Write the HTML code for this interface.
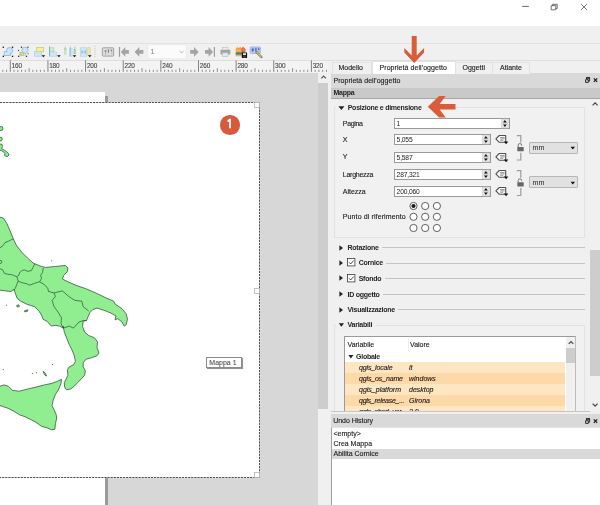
<!DOCTYPE html>
<html lang="it"><head><meta charset="utf-8"><title>Layout</title>
<style>
*{box-sizing:border-box;margin:0;padding:0}
html,body{width:600px;height:505px;overflow:hidden;background:#fff}
body{position:relative;font-family:"Liberation Sans",sans-serif;font-size:7px;color:#1a1a1a;line-height:1}
.a{position:absolute}
.t{position:absolute;white-space:nowrap;line-height:10px;height:10px;-webkit-text-stroke:0.12px currentColor}
.b{font-weight:bold;letter-spacing:-0.25px;-webkit-text-stroke:0 transparent;color:#242424}
.inp{position:absolute;background:#fff;border:1px solid #999;height:11px}
.inp span{position:absolute;left:1.6px;top:0;line-height:9px;font-size:6.7px;letter-spacing:-0.18px}
.combo{position:absolute;background:#e1e1e1;border:1px solid #b6b6b6;border-radius:1px;height:12px}
.combo span{position:absolute;left:2.6px;top:0.3px;line-height:10px;letter-spacing:0.1px}
.ln{position:absolute;height:1px;background:#c4c4c4}
.rad{position:absolute;width:8px;height:8px;border:1px solid #333;border-radius:50%;background:#fff}
.row{position:absolute;left:345px;width:220px;height:11px}
.row i{position:absolute;top:0;line-height:11px;font-style:italic;-webkit-text-stroke:0.12px currentColor}
svg{position:absolute;overflow:visible}
</style></head><body>
<div id="root" style="position:absolute;left:0;top:0;width:600px;height:505px;will-change:transform">

<div class="a" style="left:0;top:26px;width:600px;height:34px;background:#f0f0f0"></div>
<div class="a" style="left:0;top:43px;width:600px;height:1px;background:#e2e2e2"></div>
<div class="a" style="left:0;top:60px;width:600px;height:1px;background:#dedede"></div>
<svg style="left:520px;top:0" width="80" height="14" viewBox="0 0 80 14">
<path d="M2.2 6.4h6.6" stroke="#444" stroke-width="0.8" fill="none"/>
<path d="M31.2 5.6h4.6v4.2h-4.6zM32.6 5.6v-1.3h4.6v4.2h-1.4" stroke="#444" stroke-width="0.75" fill="none"/>
<path d="M61.2 4.2l5.6 5.6M66.8 4.2l-5.6 5.6" stroke="#444" stroke-width="0.75" fill="none"/>
</svg>
<div class="a" style="left:0;top:60.6px;width:328px;height:12.4px;background:#f3f3f3"></div>
<svg style="left:0;top:60px" width="328" height="13" viewBox="0 0 328 13"><path d="M2.77 9.8v2.1M6.54 9.8v2.1M14.06 9.8v2.1M17.83 9.8v2.1M21.59 9.8v2.1M25.36 9.8v2.1M29.12 8.2v3.7M32.88 9.8v2.1M36.65 9.8v2.1M40.41 9.8v2.1M44.18 9.8v2.1M51.70 9.8v2.1M55.47 9.8v2.1M59.23 9.8v2.1M63.00 9.8v2.1M66.76 8.2v3.7M70.52 9.8v2.1M74.29 9.8v2.1M78.05 9.8v2.1M81.82 9.8v2.1M89.34 9.8v2.1M93.11 9.8v2.1M96.87 9.8v2.1M100.64 9.8v2.1M104.40 8.2v3.7M108.16 9.8v2.1M111.93 9.8v2.1M115.69 9.8v2.1M119.46 9.8v2.1M126.98 9.8v2.1M130.75 9.8v2.1M134.51 9.8v2.1M138.28 9.8v2.1M142.04 8.2v3.7M145.80 9.8v2.1M149.57 9.8v2.1M153.33 9.8v2.1M157.10 9.8v2.1M164.62 9.8v2.1M168.39 9.8v2.1M172.15 9.8v2.1M175.92 9.8v2.1M179.68 8.2v3.7M183.44 9.8v2.1M187.21 9.8v2.1M190.97 9.8v2.1M194.74 9.8v2.1M202.26 9.8v2.1M206.03 9.8v2.1M209.79 9.8v2.1M213.56 9.8v2.1M217.32 8.2v3.7M221.08 9.8v2.1M224.85 9.8v2.1M228.61 9.8v2.1M232.38 9.8v2.1M239.90 9.8v2.1M243.67 9.8v2.1M247.43 9.8v2.1M251.20 9.8v2.1M254.96 8.2v3.7M258.72 9.8v2.1M262.49 9.8v2.1M266.25 9.8v2.1M270.02 9.8v2.1M277.54 9.8v2.1M281.31 9.8v2.1M285.07 9.8v2.1M288.84 9.8v2.1M292.60 8.2v3.7M296.36 9.8v2.1M300.13 9.8v2.1M303.89 9.8v2.1M307.66 9.8v2.1M315.18 9.8v2.1M318.95 9.8v2.1M322.71 9.8v2.1M326.48 9.8v2.1" stroke="#606060" stroke-width="0.7" fill="none"/><path d="M10.30 0.3v11.6M47.94 0.3v11.6M85.58 0.3v11.6M123.22 0.3v11.6M160.86 0.3v11.6M198.50 0.3v11.6M236.14 0.3v11.6M273.78 0.3v11.6M311.42 0.3v11.6" stroke="#767676" stroke-width="0.9" fill="none"/></svg>
<div class="t" style="left:11.6px;top:62px;font-size:6.4px;letter-spacing:-0.12px;line-height:7px;height:7px;color:#484848">160</div>
<div class="t" style="left:49.2px;top:62px;font-size:6.4px;letter-spacing:-0.12px;line-height:7px;height:7px;color:#484848">180</div>
<div class="t" style="left:86.9px;top:62px;font-size:6.4px;letter-spacing:-0.12px;line-height:7px;height:7px;color:#484848">200</div>
<div class="t" style="left:124.5px;top:62px;font-size:6.4px;letter-spacing:-0.12px;line-height:7px;height:7px;color:#484848">220</div>
<div class="t" style="left:162.2px;top:62px;font-size:6.4px;letter-spacing:-0.12px;line-height:7px;height:7px;color:#484848">240</div>
<div class="t" style="left:199.8px;top:62px;font-size:6.4px;letter-spacing:-0.12px;line-height:7px;height:7px;color:#484848">260</div>
<div class="t" style="left:237.4px;top:62px;font-size:6.4px;letter-spacing:-0.12px;line-height:7px;height:7px;color:#484848">280</div>
<div class="t" style="left:275.1px;top:62px;font-size:6.4px;letter-spacing:-0.12px;line-height:7px;height:7px;color:#484848">300</div>
<div class="t" style="left:312.7px;top:62px;font-size:6.4px;letter-spacing:-0.12px;line-height:7px;height:7px;color:#484848">320</div>
<div class="a" style="left:0;top:72.5px;width:318.4px;height:432.5px;background:#d7d7d7"></div>
<div class="a" style="left:0;top:92px;width:105px;height:413px;background:#fff"></div>
<div class="a" style="left:105px;top:96px;width:3px;height:409px;background:#9a9a9a"></div>
<div class="a" style="left:0;top:102px;width:260px;height:376px;background:#fff"></div>
<svg style="left:0;top:0" width="320" height="505" viewBox="0 0 320 505">
<g id="MAP"><g fill="#90ee90" stroke="#2b4f33" stroke-width="0.75" stroke-linejoin="round">
<path d="M0.0 217.2L3.3 218.0L6.9 223.6L10.5 231.9L13.3 238.8L16.6 245.7L22.2 252.7L27.7 258.2L33.3 263.2L41.6 266.5L45.7 267.4L55.4 266.5L65.2 265.4L67.9 267.9L67.4 271.5L63.8 275.4L62.4 279.0L67.9 281.8L76.2 285.4L85.9 288.7L95.6 292.9L105.4 297.6L113.7 301.2L115.1 304.0L122.0 308.7L126.1 313.7L127.5 319.2L126.1 324.8L124.2 326.1L122.0 322.0L117.8 318.7L115.1 319.8L115.9 315.9L110.9 313.1L104.0 310.3L97.0 308.1L92.9 309.5L90.1 312.3L88.2 316.4L86.5 320.6L83.2 321.1L82.6 326.6L84.6 332.2L88.7 335.5L94.3 337.7L97.6 341.9L97.0 347.4L99.0 353.0L97.0 355.7L91.5 357.7L85.9 359.3L83.2 362.7L83.2 366.8L85.4 371.0L84.6 375.2L81.0 379.3L77.6 382.6L74.3 386.2L70.7 389.0L66.5 389.8L64.6 387.1L64.3 382.6L66.0 379.3L67.9 375.2L67.4 369.6L69.3 366.8L73.5 364.9L75.4 361.3L74.3 355.7L72.1 350.2L69.3 344.7L66.5 337.7L64.3 332.2L63.2 326.1L63.2 328.1L59.6 326.1L55.4 325.3L51.3 326.1L47.1 321.4L43.0 319.2L41.6 315.1L38.8 310.9L34.7 306.7L30.5 305.4L26.3 304.0L20.8 301.2L17.2 298.4L15.2 292.9L13.9 289.3L11.1 291.5L5.5 290.9L0.0 290.1L-2.0 290.0L-2.0 217.0z"/>
<path d="M0.0 386.2L4.2 384.9L8.3 386.2L12.5 390.4L19.4 391.2L27.7 389.0L36.0 387.1L44.4 384.9L51.3 383.5L56.8 381.5L61.5 379.3L61.0 383.5L58.8 389.0L55.4 394.6L53.2 400.1L52.1 405.6L54.1 409.8L56.0 414.0L56.8 418.1L55.4 423.7L54.9 429.2L51.3 429.8L47.1 427.8L41.6 426.4L36.0 422.3L30.5 419.5L25.0 416.7L19.4 414.8L13.9 411.2L8.3 408.4L2.8 406.5L0.0 405.6L-2.0 405.0L-2.0 386.0z"/>
<path d="M-1.0 126.8L2.2 126.6L3.0 128.2L2.4 130.2L-1.0 130.6z"/>
<path d="M-1.0 137.6L1.6 137.3L2.3 139.0L1.2 141.0L-1.0 141.2z"/>
<path d="M-1.0 144.0L2.0 144.2L2.4 146.5L1.6 148.6L4.0 150.0L6.4 151.6L8.2 153.2L9.0 155.0L7.6 156.4L5.6 156.3L4.4 155.0L5.2 153.6L3.4 152.0L1.2 150.4L-1.0 150.0z"/>
<path d="M43.0 371.5L44.9 372.7L46.6 376.0L45.2 375.4L43.8 373.2z"/>
<path d="M16.6 305.4L18.9 304.8L19.4 306.5L17.2 307.0z"/>
<path d="M24.4 310.9L27.7 309.8L28.0 310.9L25.0 312.0z"/>
</g><g fill="none" stroke="#2b4f33" stroke-width="0.7">
<path d="M-1.0 248.6L3.0 245.6L5.0 242.6L8.9 241.0L13.5 238.7"/>
<path d="M-1.0 260.4L1.4 260.6L2.0 262.0L1.0 263.4L-1.0 263.2"/>
<path d="M-1.0 268.0L3.0 270.3L4.4 273.3L7.9 274.3L11.9 274.7L16.8 276.7L18.8 275.3L19.8 272.3L22.2 270.3L24.8 270.0L27.7 271.3L31.3 270.7L34.7 264.0"/>
<path d="M16.8 276.7L18.2 281.2L16.8 284.2L15.4 288.2L13.9 290.5"/>
<path d="M18.2 281.2L21.8 282.6L26.7 283.8L29.7 285.2L34.7 283.2L39.6 281.8L41.6 278.3L40.6 275.3L42.6 272.3L43.2 268.0"/>
<path d="M39.6 281.8L44.4 284.6L47.7 288.2L48.5 291.5L54.1 292.9L62.4 290.9L68.8 296.5L74.9 300.4L81.8 301.2L83.2 306.7L88.7 310.9"/>
<path d="M54.1 292.9L55.4 296.5L52.1 300.4L54.1 306.7L58.2 312.3L61.5 317.8L61.0 323.4L63.2 328.1"/>
<path d="M63.2 328.1L69.3 326.1L73.5 328.1L79.0 322.0L83.2 320.6L86.5 320.6"/>
</g>
<g fill="#2b4f33">
<rect x="52.1" y="364.1" width="0.9" height="0.9"/>
<rect x="2.8" y="369.1" width="0.9" height="0.9"/>
<rect x="31.9" y="373.2" width="0.9" height="0.9"/>
<rect x="36.0" y="372.4" width="0.9" height="0.9"/>
<rect x="51.3" y="260.4" width="0.9" height="0.9"/>
<rect x="6.1" y="304.8" width="0.9" height="0.9"/>
</g></g>
<path d="M0 102.5H259.5V477.5H0" stroke="#3c3c3c" stroke-width="0.9" stroke-dasharray="2.2 0.9" fill="none"/>
<rect x="254.5" y="102.5" width="5" height="5" fill="#fff" stroke="#9db3c2" stroke-width="0.7"/>
<rect x="254.5" y="288.5" width="5" height="5" fill="#fff" stroke="#9db3c2" stroke-width="0.7"/>
<rect x="254.5" y="472.5" width="5" height="5" fill="#fff" stroke="#9db3c2" stroke-width="0.7"/>
</svg>
<div class="a" style="left:220px;top:115px;width:19.6px;height:19.6px;border-radius:50%;background:#d65a3b"></div>
<div class="t" style="left:220px;top:114.6px;width:19.6px;height:19.6px;line-height:19.6px;text-align:center;color:#fff;font-weight:bold;font-size:11.3px;font-family:NanumGothic,'Liberation Sans',sans-serif;-webkit-text-stroke:0.65px #fff">1</div>
<div class="a" style="left:206.3px;top:357.3px;width:35.5px;height:11.2px;background:#fff;border:1px solid #8a8a8a;box-shadow:1.4px 1.4px 0.6px rgba(60,60,60,.55)"></div>
<div class="t" style="left:209.3px;top:358px;color:#575757;font-size:7px">Mappa 1</div>
<div class="a" style="left:318.4px;top:73px;width:9.6px;height:432px;background:#f0f0f0"></div>
<div class="a" style="left:318.4px;top:83px;width:9.4px;height:325.7px;background:#cdcdcd"></div>
<svg style="left:319px;top:73px" width="9" height="10" viewBox="0 0 9 10"><path d="M2.3 5.4L4.6 3.1L6.9 5.4" stroke="#555" stroke-width="1.1" fill="none"/></svg>
<div class="a" style="left:328px;top:61px;width:3px;height:444px;background:#f0f0f0"></div>
<svg style="left:0;top:44px" width="270" height="16" viewBox="0 44 270 16">
<rect x="4.2" y="51.8" width="6.2" height="3.5" fill="#d0e6f6" stroke="#6aaade" stroke-width="0.7"/><circle cx="9.6" cy="50.6" r="3.1" fill="#d0e6f6" stroke="#6aaade" stroke-width="0.7"/><rect x="4.6" y="52.2" width="5.4" height="2.7" fill="#d0e6f6"/>
<rect x="2.7" y="46.6" width="1.3" height="1.3" fill="#111"/>
<rect x="11.9" y="46.6" width="1.3" height="1.3" fill="#111"/>
<rect x="2.7" y="55.7" width="1.3" height="1.3" fill="#111"/>
<rect x="11.9" y="55.7" width="1.3" height="1.3" fill="#111"/>
<rect x="19.8" y="52.4" width="5.4" height="3" fill="#f3f0a2" stroke="#c4c264" stroke-width="0.6"/><circle cx="25" cy="50.3" r="3.1" fill="#d0e6f6" stroke="#6aaade" stroke-width="0.6"/><rect x="20.6" y="52.8" width="3" height="2.2" fill="#dfe39a" stroke="#a9ad5e" stroke-width="0.5"/>
<rect x="20.9" y="46.6" width="1.2" height="1.2" fill="#111"/>
<rect x="27.3" y="46.6" width="1.2" height="1.2" fill="#333"/>
<rect x="17.9" y="49.9" width="1.2" height="1.2" fill="#444"/>
<rect x="18.1" y="55.7" width="1.2" height="1.2" fill="#111"/>
<rect x="25.9" y="55.7" width="1.2" height="1.2" fill="#111"/>
<rect x="27.7" y="53.1" width="1.2" height="1.2" fill="#888"/>
<rect x="34.3" y="51.6" width="7" height="4.6" fill="#d0e6f6" stroke="#9fcbeb" stroke-width="0.6"/><rect x="36.7" y="47.5" width="7" height="4.3" fill="#f3f0a2" stroke="#c4c264" stroke-width="0.6"/><path d="M41.6 55.2h3.6l-1.8 2.1z" fill="#111"/>
<rect x="49.8" y="47.8" width="4.1" height="4" fill="#ccf0c2" stroke="#9bd48c" stroke-width="0.5"/><rect x="49.8" y="52" width="7" height="4.2" fill="#d0e6f6" stroke="#9fcbeb" stroke-width="0.5"/><path d="M49.5 46.3v10" stroke="#6f9cc4" stroke-width="0.7" fill="none"/><path d="M57.1 55.2h3.6l-1.8 2.1z" fill="#111"/>
<rect x="64.2" y="48.8" width="1.9" height="5.4" fill="#ccf0c2" stroke="#9bd48c" stroke-width="0.4"/><rect x="69.5" y="48.4" width="2.6" height="7.8" fill="#d0e6f6" stroke="#9fcbeb" stroke-width="0.4"/><rect x="73.9" y="49.2" width="1.8" height="4.6" fill="#ccf0c2" stroke="#9bd48c" stroke-width="0.4"/><path d="M65.2 46.5v3.5M70.3 46.5v9.7M74.8 46.5v7.5" stroke="#7fa6c8" stroke-width="0.6"/><path d="M72.7 55.2h3.6l-1.8 2.1z" fill="#111"/>
<rect x="80.6" y="47.8" width="6.2" height="8.4" fill="#d0e6f6" stroke="#9fcbeb" stroke-width="0.5"/><path d="M81.4 50l2.3 2l-2.3 2zM86 50l-2.3 2l2.3 2z" fill="#92bfe4"/><rect x="87.9" y="47.8" width="2.2" height="7.7" fill="#f3f0a2" stroke="#c4c264" stroke-width="0.5"/><path d="M88 55.2h3.6l-1.8 2.1z" fill="#111"/>
<path d="M95 46v12" stroke="#c8c8c8" stroke-width="1" stroke-dasharray="1 1"/>
<rect x="102.4" y="47.8" width="11.3" height="8.3" rx="0.8" fill="#dedede" stroke="#8e8e8e" stroke-width="0.8"/><path d="M104.4 50.2h2.2l-0.4 2.4h-1.2zM107.6 49.6h1.8l-0.6 3.4h-0.9zM110.6 49.4h1.6v2.2h-1.2z" fill="#8a8a8a"/><path d="M105.6 53v1.6M111.8 52.6v1.6" stroke="#9a9a9a" stroke-width="0.7"/>
<path d="M119.5 47v9.8" stroke="#9c9c9c" stroke-width="1.2"/><path d="M120.8 51.9l4.5-4.8v2.9h3.6v3.8h-3.6v2.9z" fill="#a4a4a4"/>
<path d="M134.6 51.9l4.7-4.8v2.9h4.1v3.8h-4.1v2.9z" fill="#a4a4a4"/>
<rect x="148" y="45" width="38" height="13.6" fill="#fbfbfb" stroke="#e8e8e8" stroke-width="0.5"/><path d="M179.6 51l1.9 1.9l1.9-1.9" stroke="#9a9a9a" stroke-width="0.8" fill="none"/>
<path d="M198.7 51.9l-4.7-4.8v2.9h-3.8v3.8h3.8v2.9z" fill="#a4a4a4"/>
<path d="M214.4 47v9.8" stroke="#9c9c9c" stroke-width="1.2"/><path d="M213.1 51.9l-4.5-4.8v2.9h-3.6v3.8h3.6v2.9z" fill="#a4a4a4"/>
<rect x="222.6" y="47.6" width="5.4" height="2.8" fill="#ececec" stroke="#b4b4b4" stroke-width="0.5"/><rect x="220.4" y="49.8" width="10" height="4.6" rx="0.9" fill="#a2a4a8"/><rect x="222.6" y="52.8" width="5.4" height="3.8" fill="#e2e8ee" stroke="#b0b4b8" stroke-width="0.5"/>
<path d="M235.6 49.4l1.6-2.4l1.5 1.6l1.5-2l1.4 2.8z" fill="#f0922e"/><rect x="235.6" y="48.8" width="9" height="7.5" fill="#f0b63a"/><path d="M241 48.8l2-2.2l2.6 2.6v3.2h-4.6z" fill="#e8705a"/><rect x="235.8" y="52.3" width="7.6" height="2.3" fill="#3b7ea6"/><rect x="241.8" y="52.6" width="5.3" height="5.3" rx="0.4" fill="#141414"/><rect x="243" y="53.2" width="3" height="1.9" fill="#e6e6e6"/><rect x="243.4" y="56.2" width="2.2" height="1.3" fill="#5a5a5a"/>
<rect x="250.2" y="46.9" width="10.2" height="6.6" rx="0.9" fill="#b6c8ee" stroke="#8aa2da" stroke-width="0.6"/><path d="M251.8 48.6h2v1.8l-1 1.2h-1zM255 48.2h1.8l-0.4 2.8h-1zM258 48.2h1.4v2h-1z" fill="#4765b0"/><path d="M256.4 52l5 5" stroke="#6d6838" stroke-width="2.2" stroke-linecap="round"/><path d="M256.6 52.2l4.6 4.6" stroke="#cfc888" stroke-width="1.1" stroke-linecap="round"/>
</svg>
<div class="t" style="left:150.6px;top:47.3px;color:#8c8c8c;font-size:7px">1</div>
<div class="a" style="left:331px;top:61px;width:269px;height:444px;background:#f0f0f0"></div>
<div class="a" style="left:331px;top:73px;width:269px;height:1px;background:#d9d9d9"></div>
<div class="a" style="left:332px;top:62px;width:40px;height:12px;border:1px solid #e2e2e2;border-bottom:none;background:#f0f0f0"></div>
<div class="a" style="left:455px;top:62px;width:37.5px;height:12px;border:1px solid #e2e2e2;border-bottom:none;border-left:none;background:#f0f0f0"></div>
<div class="a" style="left:492.5px;top:62px;width:37px;height:12px;border:1px solid #e2e2e2;border-bottom:none;border-left:none;background:#f0f0f0"></div>
<div class="a" style="left:371.5px;top:60.5px;width:84px;height:13.5px;border:1px solid #e2e2e2;border-bottom:none;background:#fff"></div>
<div class="t" id="tb1" style="left:338.5px;top:63.2px">Modello</div>
<div class="t" id="tb2" style="letter-spacing:0.07px;left:379.5px;top:63px">Proprietà dell'oggetto</div>
<div class="t" id="tb3" style="left:462.5px;top:63.2px">Oggetti</div>
<div class="t" id="tb4" style="left:500px;top:63.2px">Atlante</div>
<div class="a" style="left:331px;top:74px;width:269px;height:13.5px;background:#d9d9d9"></div>
<div class="t" id="dt1" style="letter-spacing:0.04px;left:333.5px;top:75.5px">Proprietà dell'oggetto</div>
<svg style="left:584px;top:76px" width="16" height="9" viewBox="0 0 16 9">
<path d="M1.6 3.7h2.7v2.7h-2.7z" stroke="#1a1a1a" stroke-width="0.9" fill="none"/><path d="M2.5 3v-1.1h3.1v3.2h-1" stroke="#1a1a1a" stroke-width="0.9" fill="none"/><path d="M2.1 1.9h3.9" stroke="#1a1a1a" stroke-width="1.3"/>
<path d="M9.8 2.4l3.4 3.4M13.2 2.4l-3.4 3.4" stroke="#1a1a1a" stroke-width="1.2" fill="none"/></svg>
<div class="a" style="left:331px;top:87.5px;width:269px;height:11px;background:#c9c9c9"></div>
<div class="t b" id="mp" style="left:333.5px;top:88px">Mappa</div>
<div class="a" style="left:331px;top:98px;width:269px;height:1px;background:#a6a6a6"></div>
<div class="a" style="left:331px;top:99px;width:258.5px;height:311.5px;background:#f0f0f0"></div>
<div class="a" style="left:333.5px;top:107px;width:251px;height:131px;border:1px solid #e2e2e2;background:#f1f1f1"></div>
<div class="a" style="left:336px;top:102px;width:92px;height:10px;background:#f0f0f0"></div>
<svg style="left:338px;top:103.8px" width="8" height="8" viewBox="0 0 8 8"><path d="M0.4 2.2h6l-3 3.7z" fill="#222"/></svg>
<div class="t b" id="g1" style="left:347.7px;top:102.6px">Posizione e dimensione</div>
<div class="t" id="f1" style="letter-spacing:-0.33px;left:342.8px;top:118.5px">Pagina</div>
<div class="inp" style="left:394px;top:118px;width:116px"><span>1</span></div>
<svg style="left:501.2px;top:118px" width="8" height="11" viewBox="0 0 8 11"><rect x="0.4" y="1" width="7" height="4.3" rx="0.6" fill="#e6e6e6" stroke="#bdbdbd" stroke-width="0.5"/><rect x="0.4" y="5.7" width="7" height="4.3" rx="0.6" fill="#e6e6e6" stroke="#bdbdbd" stroke-width="0.5"/><path d="M2 4.4L3.9 2.1L5.8 4.4zM2 6.6L3.9 8.9L5.8 6.6z" fill="#111"/></svg>
<div class="t" id="f2" style="left:342.8px;top:134.5px">X</div>
<div class="inp" style="left:394px;top:134px;width:96.5px"><span>5,055</span></div>
<svg style="left:481.7px;top:134px" width="8" height="11" viewBox="0 0 8 11"><rect x="0.4" y="1" width="7" height="4.3" rx="0.6" fill="#e6e6e6" stroke="#bdbdbd" stroke-width="0.5"/><rect x="0.4" y="5.7" width="7" height="4.3" rx="0.6" fill="#e6e6e6" stroke="#bdbdbd" stroke-width="0.5"/><path d="M2 4.4L3.9 2.1L5.8 4.4zM2 6.6L3.9 8.9L5.8 6.6z" fill="#111"/></svg>
<div class="t" id="f3" style="left:342.8px;top:152.0px">Y</div>
<div class="inp" style="left:394px;top:151.5px;width:96.5px"><span>5,587</span></div>
<svg style="left:481.7px;top:151.5px" width="8" height="11" viewBox="0 0 8 11"><rect x="0.4" y="1" width="7" height="4.3" rx="0.6" fill="#e6e6e6" stroke="#bdbdbd" stroke-width="0.5"/><rect x="0.4" y="5.7" width="7" height="4.3" rx="0.6" fill="#e6e6e6" stroke="#bdbdbd" stroke-width="0.5"/><path d="M2 4.4L3.9 2.1L5.8 4.4zM2 6.6L3.9 8.9L5.8 6.6z" fill="#111"/></svg>
<div class="t" id="f4" style="letter-spacing:-0.25px;left:342.8px;top:169.5px">Larghezza</div>
<div class="inp" style="left:394px;top:169px;width:96.5px"><span>287,321</span></div>
<svg style="left:481.7px;top:169px" width="8" height="11" viewBox="0 0 8 11"><rect x="0.4" y="1" width="7" height="4.3" rx="0.6" fill="#e6e6e6" stroke="#bdbdbd" stroke-width="0.5"/><rect x="0.4" y="5.7" width="7" height="4.3" rx="0.6" fill="#e6e6e6" stroke="#bdbdbd" stroke-width="0.5"/><path d="M2 4.4L3.9 2.1L5.8 4.4zM2 6.6L3.9 8.9L5.8 6.6z" fill="#111"/></svg>
<div class="t" id="f5" style="left:342.8px;top:186.5px">Altezza</div>
<div class="inp" style="left:394px;top:186px;width:96.5px"><span>200,060</span></div>
<svg style="left:481.7px;top:186px" width="8" height="11" viewBox="0 0 8 11"><rect x="0.4" y="1" width="7" height="4.3" rx="0.6" fill="#e6e6e6" stroke="#bdbdbd" stroke-width="0.5"/><rect x="0.4" y="5.7" width="7" height="4.3" rx="0.6" fill="#e6e6e6" stroke="#bdbdbd" stroke-width="0.5"/><path d="M2 4.4L3.9 2.1L5.8 4.4zM2 6.6L3.9 8.9L5.8 6.6z" fill="#111"/></svg>
<svg style="left:494.5px;top:134px" width="15" height="12" viewBox="0 0 15 12"><path d="M0.9 4.9L4.3 1.5h6.4v6.8H4.3z" fill="#fafafa" stroke="#505050" stroke-width="1.1" stroke-linejoin="round"/><path d="M5.2 3.5h4.4M5.2 4.9h4.4M5.2 6.3h3" stroke="#707070" stroke-width="0.7"/><path d="M8.9 7.6h4.4l-2.2 2.6z" fill="#111"/></svg>
<svg style="left:494.5px;top:151.5px" width="15" height="12" viewBox="0 0 15 12"><path d="M0.9 4.9L4.3 1.5h6.4v6.8H4.3z" fill="#fafafa" stroke="#505050" stroke-width="1.1" stroke-linejoin="round"/><path d="M5.2 3.5h4.4M5.2 4.9h4.4M5.2 6.3h3" stroke="#707070" stroke-width="0.7"/><path d="M8.9 7.6h4.4l-2.2 2.6z" fill="#111"/></svg>
<svg style="left:494.5px;top:169px" width="15" height="12" viewBox="0 0 15 12"><path d="M0.9 4.9L4.3 1.5h6.4v6.8H4.3z" fill="#fafafa" stroke="#505050" stroke-width="1.1" stroke-linejoin="round"/><path d="M5.2 3.5h4.4M5.2 4.9h4.4M5.2 6.3h3" stroke="#707070" stroke-width="0.7"/><path d="M8.9 7.6h4.4l-2.2 2.6z" fill="#111"/></svg>
<svg style="left:494.5px;top:186px" width="15" height="12" viewBox="0 0 15 12"><path d="M0.9 4.9L4.3 1.5h6.4v6.8H4.3z" fill="#fafafa" stroke="#505050" stroke-width="1.1" stroke-linejoin="round"/><path d="M5.2 3.5h4.4M5.2 4.9h4.4M5.2 6.3h3" stroke="#707070" stroke-width="0.7"/><path d="M8.9 7.6h4.4l-2.2 2.6z" fill="#111"/></svg>
<svg style="left:514px;top:135px" width="12" height="26" viewBox="0 0 12 26"><path d="M2.8 0.6h4v6.9 M6.8 17.7v7.3 h-4" stroke="#9c9c9c" stroke-width="1.2" fill="none"/>
<path d="M4.2 12.1 v-1.9a1.7 1.7 0 0 1 3.4 0v0.6" stroke="#6a6a6a" stroke-width="0.9" fill="none"/><rect x="3.3" y="11.9" width="6.4" height="4.3" rx="0.4" fill="#666"/></svg>
<div class="combo" style="left:529px;top:141.5px;width:49px"><span>mm</span></div>
<svg style="left:570px;top:145.9px" width="6" height="5" viewBox="0 0 6 5"><path d="M0.6 0.8h4.4l-2.2 2.6z" fill="#111"/></svg>
<svg style="left:514px;top:169.5px" width="12" height="26.5" viewBox="0 0 12 26.5"><path d="M2.8 0.6h4v7.200000000000012 M6.8 18.00000000000001v7.4999999999999885 h-4" stroke="#9c9c9c" stroke-width="1.2" fill="none"/>
<path d="M4.2 12.400000000000011 v-1.9a1.7 1.7 0 0 1 3.4 0v0.6" stroke="#6a6a6a" stroke-width="0.9" fill="none"/><rect x="3.3" y="12.200000000000012" width="6.4" height="4.3" rx="0.4" fill="#666"/></svg>
<div class="combo" style="left:529px;top:176.3px;width:49px"><span>mm</span></div>
<svg style="left:570px;top:180.70000000000002px" width="6" height="5" viewBox="0 0 6 5"><path d="M0.6 0.8h4.4l-2.2 2.6z" fill="#111"/></svg>
<div class="t" id="pr" style="letter-spacing:0.115px;left:342.8px;top:211.5px">Punto di riferimento</div>
<svg style="left:405px;top:200px" width="40" height="36" viewBox="405 200 40 36">
<circle cx="413.5" cy="206" r="3.6" fill="#fff" stroke="#3a3a3a" stroke-width="0.8"/>
<circle cx="425.2" cy="206" r="3.6" fill="#fff" stroke="#3a3a3a" stroke-width="0.8"/>
<circle cx="436.9" cy="206" r="3.6" fill="#fff" stroke="#3a3a3a" stroke-width="0.8"/>
<circle cx="413.5" cy="216.8" r="3.6" fill="#fff" stroke="#3a3a3a" stroke-width="0.8"/>
<circle cx="425.2" cy="216.8" r="3.6" fill="#fff" stroke="#3a3a3a" stroke-width="0.8"/>
<circle cx="436.9" cy="216.8" r="3.6" fill="#fff" stroke="#3a3a3a" stroke-width="0.8"/>
<circle cx="413.5" cy="228" r="3.6" fill="#fff" stroke="#3a3a3a" stroke-width="0.8"/>
<circle cx="425.2" cy="228" r="3.6" fill="#fff" stroke="#3a3a3a" stroke-width="0.8"/>
<circle cx="436.9" cy="228" r="3.6" fill="#fff" stroke="#3a3a3a" stroke-width="0.8"/>
<circle cx="413.5" cy="206" r="2.1" fill="#1a1a1a"/></svg>
<svg style="left:338px;top:243.6px" width="8" height="8" viewBox="0 0 8 8"><path d="M1.4 1.2v5.6l3.6-2.8z" fill="#222"/></svg>
<div class="t b" id="g2" style="left:347.5px;top:243.1px">Rotazione</div>
<div class="ln" style="left:382px;top:247.29999999999998px;width:202.5px"></div>
<svg style="left:338px;top:258.8px" width="8" height="8" viewBox="0 0 8 8"><path d="M1.4 1.2v5.6l3.6-2.8z" fill="#222"/></svg>
<svg style="left:346.5px;top:258.40000000000003px" width="9" height="9" viewBox="0 0 9 9"><rect x="0.5" y="0.5" width="7.4" height="7.4" fill="#fff" stroke="#3c3c3c" stroke-width="0.8"/><path d="M2 4.3l1.7 1.7l2.9-3.5" stroke="#222" stroke-width="0.8" fill="none"/></svg>
<div class="t b" id="g3" style="left:358.7px;top:258.3px">Cornice</div>
<div class="ln" style="left:386px;top:262.5px;width:198.5px"></div>
<svg style="left:338px;top:274.2px" width="8" height="8" viewBox="0 0 8 8"><path d="M1.4 1.2v5.6l3.6-2.8z" fill="#222"/></svg>
<svg style="left:346.5px;top:273.8px" width="9" height="9" viewBox="0 0 9 9"><rect x="0.5" y="0.5" width="7.4" height="7.4" fill="#fff" stroke="#3c3c3c" stroke-width="0.8"/><path d="M2 4.3l1.7 1.7l2.9-3.5" stroke="#222" stroke-width="0.8" fill="none"/></svg>
<div class="t b" id="g4" style="left:358.7px;top:273.7px">Sfondo</div>
<div class="ln" style="left:385px;top:277.9px;width:199.5px"></div>
<svg style="left:338px;top:290.3px" width="8" height="8" viewBox="0 0 8 8"><path d="M1.4 1.2v5.6l3.6-2.8z" fill="#222"/></svg>
<div class="t b" id="g5" style="left:347.5px;top:289.8px">ID oggetto</div>
<div class="ln" style="left:383px;top:294.0px;width:201.5px"></div>
<svg style="left:338px;top:305.6px" width="8" height="8" viewBox="0 0 8 8"><path d="M1.4 1.2v5.6l3.6-2.8z" fill="#222"/></svg>
<div class="t b" id="g6" style="left:347.5px;top:305.1px">Visualizzazione</div>
<div class="ln" style="left:398px;top:309.3px;width:186.5px"></div>
<div class="a" style="left:333.5px;top:325px;width:251px;height:90px;border:1px solid #e2e2e2;background:#f1f1f1"></div>
<div class="a" style="left:336px;top:320px;width:40px;height:10px;background:#f0f0f0"></div>
<svg style="left:338px;top:320.8px" width="8" height="8" viewBox="0 0 8 8"><path d="M0.8 2.2h5.2l-2.6 3.6z" fill="#222"/></svg>
<div class="t b" id="g7" style="left:347.5px;top:320.3px">Variabili</div>
<div class="a" style="left:344px;top:336px;width:232px;height:80px;background:#fff;border:1px solid #9a9a9a;border-right-color:#bcbcbc"></div>
<div class="a" style="left:407.5px;top:338px;width:1px;height:13px;background:#efefef"></div>
<div class="t" id="h1" style="left:347.5px;top:339.5px">Variabile</div>
<div class="t" id="h2" style="left:410px;top:339.5px">Valore</div>
<svg style="left:347.5px;top:353px" width="8" height="8" viewBox="0 0 8 8"><path d="M0.4 2h5l-2.5 3.6z" fill="#222"/></svg>
<div class="t b" id="gl" style="left:356px;top:351.8px">Globale</div>
<div class="row" style="top:361.7px;background:#ffe6c2"><i id="k0" style="letter-spacing:-0.14px;left:14px">qgis_locale</i><i id="v0" style="left:64px">it</i></div>
<div class="row" style="top:372.7px;background:#fdd9a8"><i id="k1" style="letter-spacing:-0.14px;left:14px">qgis_os_name</i><i id="v1" style="left:64px">windows</i></div>
<div class="row" style="top:383.7px;background:#ffe6c2"><i id="k2" style="left:14px">qgis_platform</i><i id="v2" style="left:64px">desktop</i></div>
<div class="row" style="top:394.7px;background:#fdd9a8"><i id="k3" style="letter-spacing:-0.26px;left:14px">qgis_release_...</i><i id="v3" style="left:64px">Girona</i></div>
<div class="row" style="top:405.7px;background:#ffe6c2"><i id="k4" style="letter-spacing:-0.26px;left:14px">qgis_short_ver...</i><i id="v4" style="left:64px">3.0</i></div>
<div class="a" style="left:565.5px;top:337px;width:9.5px;height:78px;background:#f0f0f0"></div>
<div class="a" style="left:566px;top:348px;width:9px;height:15px;background:#cdcdcd"></div>
<svg style="left:565.5px;top:338px" width="10" height="9" viewBox="0 0 10 9"><path d="M2.7 5.8L5 3.5L7.3 5.8" stroke="#444" stroke-width="1.1" fill="none"/></svg>
<div class="a" style="left:331px;top:410.5px;width:269px;height:4.5px;background:#f0f0f0"></div>
<div class="a" style="left:331px;top:410.5px;width:258.5px;height:1px;background:#c6c6c6"></div>
<div class="a" style="left:589.5px;top:99px;width:10.5px;height:312px;background:#f0f0f0"></div>
<div class="a" style="left:590px;top:249.5px;width:10px;height:126.5px;background:#cdcdcd"></div>
<svg style="left:589.5px;top:99px" width="11" height="10" viewBox="0 0 11 10"><path d="M2.6 6.4L5.1 3.9L7.6 6.4" stroke="#444" stroke-width="1.2" fill="none"/></svg>
<svg style="left:589.5px;top:400px" width="11" height="10" viewBox="0 0 11 10"><path d="M2.6 3.6L5.1 6.1L7.6 3.6" stroke="#444" stroke-width="1.2" fill="none"/></svg>
<div class="a" style="left:331px;top:414px;width:269px;height:13.3px;background:#d9d9d9"></div>
<div class="t" id="uh" style="letter-spacing:-0.07px;left:333.3px;top:416px">Undo History</div>
<svg style="left:584px;top:416.5px" width="16" height="9" viewBox="0 0 16 9">
<path d="M1.6 3.7h2.7v2.7h-2.7z" stroke="#1a1a1a" stroke-width="0.9" fill="none"/><path d="M2.5 3v-1.1h3.1v3.2h-1" stroke="#1a1a1a" stroke-width="0.9" fill="none"/><path d="M2.1 1.9h3.9" stroke="#1a1a1a" stroke-width="1.3"/>
<path d="M9.8 2.4l3.4 3.4M13.2 2.4l-3.4 3.4" stroke="#1a1a1a" stroke-width="1.2" fill="none"/></svg>
<div class="a" style="left:331px;top:427px;width:269px;height:78px;background:#fff;border-left:1px solid #a0a0a0;border-top:1px solid #e4e4e4"></div>
<div class="a" style="left:332px;top:449px;width:268px;height:9.5px;background:#d9d9d9"></div>
<div class="t" id="u1" style="left:333.5px;top:428.8px">&lt;empty&gt;</div>
<div class="t" id="u2" style="left:333.5px;top:438.6px">Crea Mappa</div>
<div class="t" id="u3" style="left:333.5px;top:448.7px">Abilita Cornice</div>
<svg style="left:400px;top:30px" width="30" height="36" viewBox="400 30 30 36"><path d="M411.7 36h5v19.4l7.4-7.4v4.5l-9.9 10.6l-9.9-10.6v-4.5l7.4 7.4z" fill="#d95c3b"/></svg>
<svg style="left:425px;top:94px" width="34" height="28" viewBox="425 94 34 28"><path d="M455.5 104.1v5.4h-15.8l6 8h-6.6l-11.3-10.7l11.3-10.7h6.6l-6 8z" fill="#d95c3b"/></svg>
</div>
</body></html>
